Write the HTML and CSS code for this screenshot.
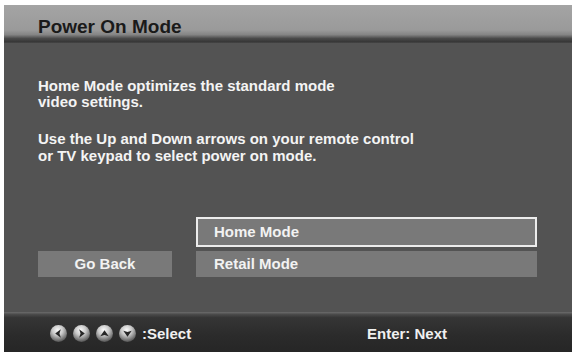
FILE: index.html
```html
<!DOCTYPE html>
<html lang="en">

<head>
    <meta charset="UTF-8">
    <title>Power On Mode</title>
    <link rel="stylesheet" href="styles.css">
</head>

<body>
    <div class="screen">
        <div class="title-bar">Power On Mode</div>

        <div class="content">
            <p class="info first">Home Mode optimizes the standard mode<br>video settings.</p>
            <p class="info second">Use the Up and Down arrows on your remote control<br>or TV keypad to select power on mode.</p>

            <div class="menu">
                <div class="back-col">
                    <div class="btn back">Go Back</div>
                </div>
                <div class="options">
                    <div class="btn option selected">Home Mode</div>
                    <div class="btn option">Retail Mode</div>
                </div>
            </div>
        </div>

        <div class="footer">
            <div class="keys">
                <!-- left / right / up / down -->
                <span class="key">
                    <svg viewBox="0 0 16 16"><path d="M10.5 3.5 L4.5 8 L10.5 12.5 L9 8 Z" /></svg>
                </span>
                <span class="key">
                    <svg viewBox="0 0 16 16"><path d="M5.5 3.5 L11.5 8 L5.5 12.5 L7 8 Z" /></svg>
                </span>
                <span class="key">
                    <svg viewBox="0 0 16 16"><path d="M3.5 11 L8 4.5 L12.5 11 L8 9.5 Z" /></svg>
                </span>
                <span class="key">
                    <svg viewBox="0 0 16 16"><path d="M3.5 5 L8 11.5 L12.5 5 L8 6.5 Z" /></svg>
                </span>
                <span class="hint">:Select</span>
            </div>
            <div class="hint">Enter: Next</div>
        </div>
    </div>
</body>

</html>
```

FILE: styles.css
```css
body {
    margin: 0;
    background-color: #fff;
    font-family: "Liberation Sans", Arial, sans-serif;
    font-weight: bold;
}

.screen {
    margin: 5px 0 0 4px;
    width: 568px;
    height: 347px;
    display: flex;
    flex-direction: column;
    background-color: #535353;
}

.title-bar {
    height: 38px;
    box-sizing: border-box;
    padding: 12px 0 0 34px;
    font-size: 19px;
    line-height: 19px;
    color: #1a1a1a;
    background: linear-gradient(to bottom, #a4a4a4 0%, #9a9a9a 66%, #858585 78%, #4a4a4a 88%, #383838 96%, #454545 100%);
}

.content {
    flex: 1;
    padding: 35px 0 0 34px;
    color: #f4f4f4;
    font-size: 15px;
}

.info {
    margin: 0;
}

.first {
    line-height: 16px;
}

.second {
    margin-top: 20px;
    line-height: 17px;
}

.menu {
    display: flex;
    margin-top: 53px;
    gap: 24px;
}

.back-col {
    display: flex;
    align-items: flex-end;
}

.options {
    display: flex;
    flex-direction: column;
    gap: 4px;
}

.btn {
    box-sizing: border-box;
    height: 26px;
    line-height: 26px;
    background-color: #797979;
    color: #f2f2f2;
    font-size: 15px;
}

.back {
    width: 134px;
    text-align: center;
}

.option {
    width: 341px;
    padding-left: 18px;
}

.selected {
    height: 30px;
    line-height: 26px;
    padding-left: 16px;
    border: 2px solid #ececec;
}

.footer {
    height: 40px;
    box-sizing: border-box;
    padding: 2px 0 0 46px;
    display: flex;
    align-items: center;
    background: linear-gradient(to bottom, #6c6c6c 0%, #4a4a4a 6%, #353535 14%, #2b2b2b 60%, #262626 100%);
    color: #f0f0f0;
    font-size: 15px;
}

.keys {
    display: flex;
    align-items: center;
    gap: 6px;
    width: 317px;
}

.key {
    width: 17px;
    height: 17px;
    border-radius: 50%;
    background: radial-gradient(circle at 45% 30%, #fafafa 0%, #c8c8c8 35%, #6a6a6a 70%, #1e1e1e 100%);
    display: flex;
    align-items: center;
    justify-content: center;
}

.key svg {
    width: 15px;
    height: 15px;
    fill: #262626;
}

.keys .hint {
    margin-left: 0;
}
```
